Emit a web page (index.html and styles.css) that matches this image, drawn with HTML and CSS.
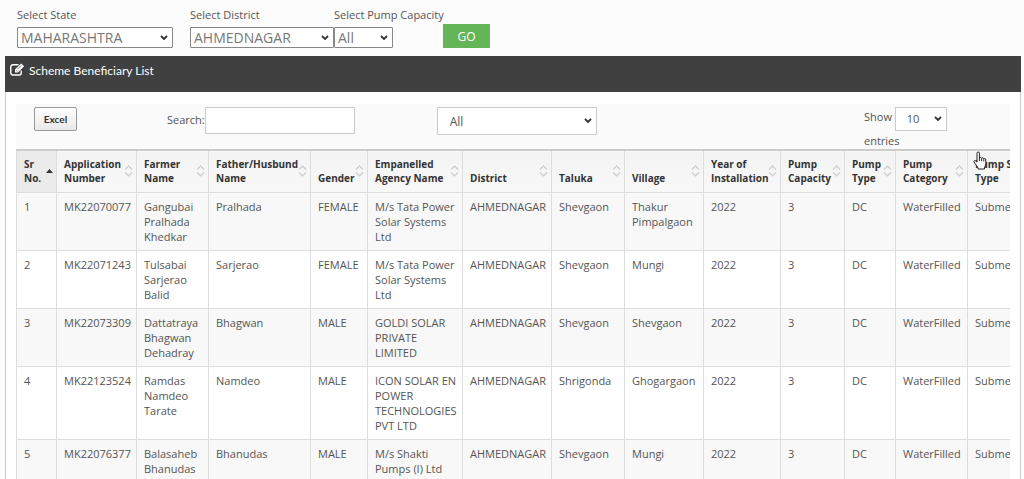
FILE: index.html
```html
<!DOCTYPE html>
<html lang="en">
<head>
<meta charset="utf-8">
<title>Scheme Beneficiary List</title>
<link rel="stylesheet" href="styles.css">
</head>
<body>
<svg class="defs" aria-hidden="true">
  <symbol id="sort" viewBox="0 0 9 12"><path d="M1 4.5 4.5 1 8 4.5M1 7.5 4.5 11 8 7.5" fill="none" stroke="#ccc" stroke-width="1.2"/></symbol>
</svg>
<form class="filters">
  <div class="field state"><label for="state">Select State</label><select id="state"><option>MAHARASHTRA</option></select></div>
  <div class="field district"><label for="district">Select District</label><select id="district"><option>AHMEDNAGAR</option></select></div>
  <div class="field capacity"><label for="capacity">Select Pump Capacity</label><select id="capacity"><option>All</option></select></div>
  <button class="go" type="button">GO</button>
</form>
<section class="panel">
  <header class="panel-head">
    <svg class="edit" viewBox="0 0 15 13" aria-hidden="true"><path d="M11.2 7.5V10a2 2 0 0 1-2 2H2.8a2 2 0 0 1-2-2V3.800a2 2 0 0 1 2-2H8.500" fill="none" stroke="#fff" stroke-width="1.400"/><path d="M5 6.600 11.200.4l2.900 2.900L7.900 9.500H5z" fill="#fff"/><path d="M6.200 7.300l1.200 1.200M7.600 6.200l3.600-3.600" stroke="#404040" stroke-width=".7"/></svg>
    <h1>Scheme Beneficiary List</h1>
  </header>
  <div class="panel-body">
    <div class="toolbar">
      <button class="excel" type="button">Excel</button>
      <div class="search"><label for="search">Search:</label><input id="search" type="text"></div>
      <select class="agency" aria-label="Agency"><option>All</option></select>
      <label class="length">Show <select><option>10</option></select> entries</label>
    </div>
    <div class="scroll">
      <table>
        <colgroup><col class="c40"><col class="c80"><col class="c72"><col class="c102"><col class="c57"><col class="c95"><col class="c89"><col class="c73"><col class="c79"><col class="c77"><col class="c64"><col class="c51"><col class="c72"><col class="c90"></colgroup>
        <thead><tr>
          <th class="sorted"><div><span>Sr<br>No.</span><svg class="up" viewBox="0 0 7 4"><path d="M0 4 3.500 0 7 4z" fill="#333"/></svg></div></th>
          <th><div><span>Application<br>Number</span><svg><use href="#sort"/></svg></div></th>
          <th><div><span>Farmer<br>Name</span><svg><use href="#sort"/></svg></div></th>
          <th><div><span>Father/Husbund<br>Name</span><svg><use href="#sort"/></svg></div></th>
          <th><div><span>Gender</span><svg><use href="#sort"/></svg></div></th>
          <th><div><span>Empanelled<br>Agency Name</span><svg><use href="#sort"/></svg></div></th>
          <th><div><span>District</span><svg><use href="#sort"/></svg></div></th>
          <th><div><span>Taluka</span><svg><use href="#sort"/></svg></div></th>
          <th><div><span>Village</span><svg><use href="#sort"/></svg></div></th>
          <th><div><span>Year of<br>Installation</span><svg><use href="#sort"/></svg></div></th>
          <th><div><span>Pump<br>Capacity</span><svg><use href="#sort"/></svg></div></th>
          <th><div><span>Pump<br>Type</span><svg><use href="#sort"/></svg></div></th>
          <th><div><span>Pump<br>Category</span><svg><use href="#sort"/></svg></div></th>
          <th><div><span>Pump Sub<br>Type</span><svg><use href="#sort"/></svg></div></th>
        </tr></thead>
        <tbody>
          <tr><td>1</td><td>MK22070077</td><td>Gangubai Pralhada Khedkar</td><td>Pralhada</td><td>FEMALE</td><td>M/s Tata Power Solar Systems Ltd</td><td>AHMEDNAGAR</td><td>Shevgaon</td><td>Thakur Pimpalgaon</td><td>2022</td><td>3</td><td>DC</td><td>WaterFilled</td><td>Submersible</td></tr>
          <tr><td>2</td><td>MK22071243</td><td>Tulsabai Sarjerao Balid</td><td>Sarjerao</td><td>FEMALE</td><td>M/s Tata Power Solar Systems Ltd</td><td>AHMEDNAGAR</td><td>Shevgaon</td><td>Mungi</td><td>2022</td><td>3</td><td>DC</td><td>WaterFilled</td><td>Submersible</td></tr>
          <tr><td>3</td><td>MK22073309</td><td>Dattatraya Bhagwan Dehadray</td><td>Bhagwan</td><td>MALE</td><td>GOLDI SOLAR PRIVATE LIMITED</td><td>AHMEDNAGAR</td><td>Shevgaon</td><td>Shevgaon</td><td>2022</td><td>3</td><td>DC</td><td>WaterFilled</td><td>Submersible</td></tr>
          <tr><td>4</td><td>MK22123524</td><td>Ramdas Namdeo Tarate</td><td>Namdeo</td><td>MALE</td><td>ICON SOLAR EN POWER TECHNOLOGIES PVT LTD</td><td>AHMEDNAGAR</td><td>Shrigonda</td><td>Ghogargaon</td><td>2022</td><td>3</td><td>DC</td><td>WaterFilled</td><td>Submersible</td></tr>
          <tr><td>5</td><td>MK22076377</td><td>Balasaheb Bhanudas</td><td>Bhanudas</td><td>MALE</td><td>M/s Shakti Pumps (I) Ltd</td><td>AHMEDNAGAR</td><td>Shevgaon</td><td>Mungi</td><td>2022</td><td>3</td><td>DC</td><td>WaterFilled</td><td>Submersible</td></tr>
        </tbody>
      </table>
    </div>
  </div>
</section>
<svg class="pointer" viewBox="0 0 14 19" aria-hidden="true"><path d="M4 11V2.200a1.200 1.200 0 0 1 2.400 0V7c.3-.9 2-.8 2.200.3.500-.8 2-.6 2.200.5.600-.6 2-.3 2 .9V13c0 1.500-1.300 2.500-1.300 4v1H5v-1c0-1.200-3.200-4.300-4-6-.5-1.300 1-2 1.900-.9z" fill="#fff" stroke="#222" stroke-width="1"/><path d="M6.400 7v3M8.600 7.500v2.800M10.800 8v2.500" stroke="#222"/></svg>
</body>
</html>
```

FILE: styles.css
```css
* { box-sizing: border-box; }
body {
  margin: 0;
  height: 100vh;
  overflow: hidden;
  background: #fcfcfc;
  color: #555;
  font: 11px/15px "Open Sans", sans-serif;
}
.defs { position: absolute; width: 0; height: 0; }
select, input, button { font: inherit; color: inherit; margin: 0; }
select {
  appearance: none;
  background: #fff url("data:image/svg+xml,%3Csvg xmlns='http://www.w3.org/2000/svg' width='8' height='6'%3E%3Cpath d='M1 1l3 3 3-3' fill='none' stroke='%23333' stroke-width='1.800'/%3E%3C/svg%3E") no-repeat right 4px center;
  border: 1px solid #888;
}
.filters {
  display: flex;
  align-items: flex-end;
  height: 56px;
  padding: 0 16px 8px 17px;
}
.field { display: flex; flex-direction: column; gap: 5px; }
.field label { line-height: 15px; white-space: nowrap; }
.field select { height: 21px; padding: 0 3px; font-size: 14px; line-height: 19px; color: #777; border-radius: 1px; }
.state { width: 156px; margin-right: 17px; }
.district { width: 144px; }
.capacity { width: 109px; }
.capacity select { width: 59px; }
.go {
  width: 47px;
  height: 24px;
  padding: 0;
  border: 0;
  background: #64b558;
  color: #fff;
  font-size: 12px;
}
.panel { margin: 0 3px 0 5px; background: #fff; border: solid #ccc; border-width: 0 1px; }
.panel-head {
  display: flex;
  gap: 4px;
  height: 36px;
  padding: 7px 5px;
  margin: 0 -1px;
  background: #404040;
  color: #fff;
}
.edit { width: 15px; height: 13px; }
.panel-head h1 { margin: 0; font: 12px/15px Lato, sans-serif; }
.panel-body { padding: 12px 10px 0; }
.toolbar {
  display: flex;
  align-items: flex-start;
  height: 45px;
  padding: 3px 18px 0;
  background: #fafafa;
}
.excel {
  width: 43px;
  height: 24px;
  padding: 0;
  border: 1px solid #999;
  border-radius: 2px;
  background: linear-gradient(#fff, #e9e9e9);
  color: #333;
  font-family: Lato, sans-serif;
  font-size: 10px;
  font-weight: 700;
}
.search { display: flex; margin-left: 90px; }
.search label { padding-top: 5px; }
.search input { width: 150px; height: 27px; border: 1px solid #ccc; background: #fff; }
.agency { width: 160px; height: 28px; margin-left: 82px; padding: 0 12px; border-color: #ccc; font-size: 12px; }
.length { width: 92px; margin: 0 36px 0 auto; line-height: 20px; }
.length select { width: 52px; height: 24px; padding: 0 11px; border-color: #ccc; vertical-align: top; }
.scroll { overflow: hidden; }
table { width: 1041px; table-layout: fixed; border-collapse: collapse; }
.c40 { width: 40px; }
.c51 { width: 51px; }
.c57 { width: 57px; }
.c64 { width: 64px; }
.c72 { width: 72px; }
.c73 { width: 73px; }
.c77 { width: 77px; }
.c79 { width: 79px; }
.c80 { width: 80px; }
.c89 { width: 89px; }
.c90 { width: 90px; }
.c95 { width: 95px; }
.c102 { width: 102px; }
th, td { border: 1px solid #ddd; text-align: left; }
th {
  height: 42px;
  padding: 5px 3px 7px 7px;
  vertical-align: bottom;
  background: linear-gradient(#f3f3f3, #f8f8f8);
  border-top: 2px solid #ccc;
  color: #333;
  font-size: 10px;
  line-height: 14px;
}
th div { display: flex; align-items: flex-end; }
th span { flex: 1; width: 0; white-space: nowrap; }
th svg { flex: none; width: 9px; height: 12px; margin-bottom: 8px; }
th .up { width: 7px; height: 4px; margin-bottom: 12px; }
th.sorted { background: #ebebeb; }
td { padding: 6px 4px 6px 7px; vertical-align: top; }
tbody tr:nth-child(odd) { background: #f8f8f8; }
.pointer { position: absolute; left: 973px; top: 151px; width: 14px; height: 19px; }
```
